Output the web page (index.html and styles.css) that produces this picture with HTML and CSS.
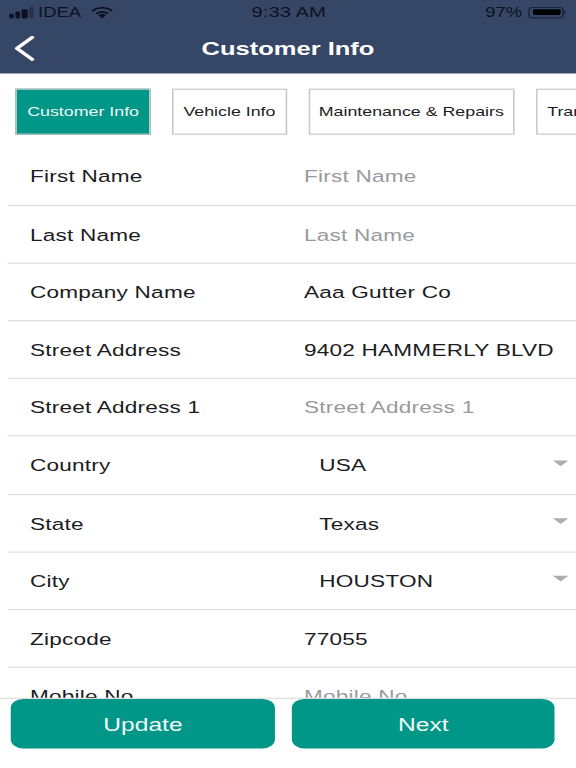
FILE: index.html
```html
<!DOCTYPE html>
<html lang="en">
<head>
  <meta charset="UTF-8" />
  <meta name="viewport" content="width=device-width, initial-scale=1.0" />
  <title>Customer Info</title>
  <link rel="stylesheet" href="styles.css">
</head>
<body>
  <header class="top">
    <div class="status">
      <div class="status-left">
        <span class="signal"><i class="b1"></i><i class="b2"></i><i class="b3"></i><i class="b4 off"></i></span>
        <span>IDEA</span>
        <svg class="wifi" width="15" height="10" viewBox="0 0 15 10">
          <path d="M7.500 10 5 7.200a3.600 3.600 0 0 1 5 0z" fill="#0c1220"/>
          <path d="M3.200 5.300a6.200 6.200 0 0 1 8.600 0l-.9 1.100a4.800 4.800 0 0 0-6.800 0z" fill="#0c1220"/>
          <path d="M.6 2.800a10 10 0 0 1 13.800 0l-.9 1.100a8.600 8.600 0 0 0-12 0z" fill="#0c1220"/>
        </svg>
      </div>
      <div class="clock">9:33 AM</div>
      <div class="status-right">
        <span>97%</span>
        <span class="battery"><span class="level"></span></span>
        <span class="nub"></span>
      </div>
    </div>
    <div class="nav">
      <svg class="back" width="14" height="22" viewBox="0 0 14 22">
        <path d="M12 1.500 2 11l10 9.500" fill="none" stroke="#fff" stroke-width="2.600" stroke-linecap="round" stroke-linejoin="round"/>
      </svg>
      <h1>Customer Info</h1>
    </div>
  </header>

  <nav class="tabs">
    <a class="tab active">Customer Info</a>
    <a class="tab vehicle">Vehicle Info</a>
    <a class="tab wide">Maintenance &amp; Repairs</a>
    <a class="tab">Transmission</a>
  </nav>

  <main class="form">
    <div class="row"><label>First Name</label><span class="value empty">First Name</span></div>
    <div class="row"><label>Last Name</label><span class="value empty">Last Name</span></div>
    <div class="row"><label>Company Name</label><span class="value">Aaa Gutter Co</span></div>
    <div class="row"><label>Street Address</label><span class="value">9402 HAMMERLY BLVD</span></div>
    <div class="row"><label>Street Address 1</label><span class="value empty">Street Address 1</span></div>
    <div class="row"><label>Country</label><span class="value pick">USA</span><span class="caret"></span></div>
    <div class="row"><label>State</label><span class="value pick">Texas</span><span class="caret"></span></div>
    <div class="row"><label>City</label><span class="value pick">HOUSTON</span><span class="caret"></span></div>
    <div class="row"><label>Zipcode</label><span class="value">77055</span></div>
    <div class="row"><label>Mobile No</label><span class="value empty">Mobile No</span></div>
  </main>

  <footer class="actions">
    <button>Update</button>
    <button>Next</button>
  </footer>
</body>
</html>
```

FILE: styles.css
```css
/* the shot is a 375x667 phone screen stretched to 576x768 */
* {
  box-sizing: border-box;
}
html {
  overflow: hidden;
  height: 768px;
  background: #fff;
}
body {
  margin: 0;
  width: 375px;
  height: 667px;
  overflow: hidden;
  display: flex;
  flex-direction: column;
  background: #fff;
  color: #1c1c1e;
  font-family: 'Liberation Sans', Arial, sans-serif;
  transform: scale(1.536, 1.1514);
  transform-origin: 0 0;
}
.top {
  height: 64.400px;
  flex: none;
  background: #364666;
}
.status {
  height: 21px;
  padding: 0 7px 0 6px;
  display: grid;
  grid-template-columns: 1fr auto 1fr;
  align-items: center;
  color: #0c1220;
  font-size: 12px;
}
.status-left {
  display: flex;
  align-items: center;
  gap: 3px;
}
.signal {
  display: flex;
  align-items: flex-end;
  gap: 1px;
  height: 10px;
}
.signal i {
  width: 3.200px;
  background: #0c1220;
  border-radius: 1px;
}
.signal .b1 { height: 4px; }
.signal .b2 { height: 6px; }
.signal .b3 { height: 8px; }
.signal .b4 { height: 10px; }
.signal .off { background: #27324c; }
.wifi {
  margin-left: 3px;
}
.clock {
  font-size: 13.200px;
  margin-left: 2px;
}
.status-right {
  display: flex;
  justify-content: flex-end;
  align-items: center;
  gap: 4px;
}
.battery {
  width: 23px;
  height: 10px;
  padding: 1.500px;
  border: 1px solid #1a2338;
  border-radius: 2.500px;
}
.level {
  display: block;
  width: 100%;
  height: 100%;
  background: #000;
  border-radius: 1px;
}
.nub {
  width: 1px;
  height: 3px;
  margin-left: -4px;
  background: #1a2338;
}
.nav {
  height: 43.400px;
  display: flex;
  align-items: center;
  justify-content: center;
  position: relative;
}
.back {
  position: absolute;
  left: 9px;
  top: 9.500px;
}
.nav h1 {
  margin: 0;
  color: #fff;
  font-size: 16.600px;
  font-weight: 700;
}
.tabs {
  flex: none;
  display: flex;
  gap: 14.300px;
  padding: 12.200px 0 0 10.400px;
  height: 64.100px;
  overflow: hidden;
  background: #fff;
}
.tab {
  flex: none;
  height: 40px;
  padding: 0 6.300px;
  display: flex;
  align-items: center;
  border: 1px solid #c8c8c8;
  background: #fff;
  font-size: 11.600px;
}
.tab.vehicle {
  padding: 0 6.300px;
}
.tab.wide {
  padding: 0 5.600px;
}
.tab.active {
  background: #009688;
  color: #f0f7f6;
}
.form {
  flex: 1;
  min-height: 0;
  overflow: hidden;
  padding-left: 5.200px;
}
.row {
  height: 50.200px;
  display: flex;
  align-items: center;
  padding: 0.800px 0 0 14.300px;
  border-bottom: 1px solid #dcdcdc;
  font-size: 14.700px;
  letter-spacing: 0.150px;
  position: relative;
}
.row label {
  width: 178.400px;
}
.value.empty {
  color: #9a9a9e;
}
.value.pick {
  margin-left: 10px;
}
.caret {
  position: absolute;
  right: 5px;
  top: 20.500px;
  border-left: 5px solid transparent;
  border-right: 5px solid transparent;
  border-top: 5px solid #adadad;
}
.actions {
  flex: none;
  height: 61.500px;
  display: flex;
  gap: 10.800px;
  padding: 0.500px 13.600px 0 7.200px;
  border-top: 1px solid #dcdcdc;
  background: #fff;
}
.actions button {
  flex: 1;
  height: 43px;
  padding: 3px 0 0;
  border: 0;
  border-radius: 8px;
  background: #009688;
  color: #f4faf9;
  font: inherit;
  font-size: 16px;
}
```
